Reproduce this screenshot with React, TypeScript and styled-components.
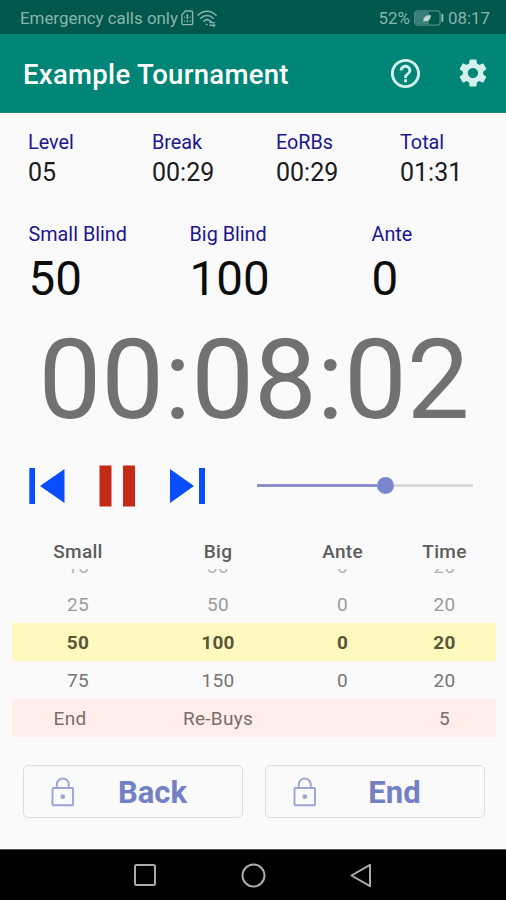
import React from "react";
import styled, { createGlobalStyle, css } from "styled-components";
import { MdHelpOutline, MdSettings } from "react-icons/md";

const GlobalStyle = createGlobalStyle`
  *, *::before, *::after { box-sizing: border-box; }
  body { margin: 0; background: #fafafa; font-family: Roboto, "Liberation Sans", sans-serif; }
  button { font-family: inherit; border: 0; padding: 0; background: none; display: block; }
  svg { display: block; flex: none; }
`;

const Screen = styled.div`
  width: 506px;
  height: 900px;
  display: flex;
  flex-direction: column;
  overflow: hidden;
  background: #fafafa;
`;

const StatusBar = styled.header`
  height: 34px;
  flex: none;
  display: flex;
  align-items: center;
  justify-content: space-between;
  padding: 2px 16px 0 20px;
  background: #00574b;
  color: #8ab5ae;
  font-size: 16.9px;
`;

const StatusGroup = styled.div<{ $gap: number }>`
  display: flex;
  align-items: center;
  gap: ${(p) => p.$gap}px;
  white-space: nowrap;
`;

const AppBar = styled.div`
  height: 79px;
  flex: none;
  display: flex;
  align-items: center;
  padding: 0 16px 0 23px;
  background: #008577;
  border-bottom: 1px solid #23887d;
`;

const Title = styled.h1`
  margin: 4px auto 0 0;
  color: #fff;
  font-size: 27.5px;
  font-weight: 500;
  letter-spacing: 0.3px;
  line-height: 36px;
  white-space: nowrap;
`;

const Actions = styled.div`
  display: flex;
  gap: 33px;
  color: #d3f1ec;
`;

const Content = styled.main`
  flex: 1;
  display: flex;
  flex-direction: column;
  padding-top: 15px;
`;

const Stats = styled.section`
  display: grid;
  grid-template-columns: 124px 124px 124px 1fr;
  padding-left: 28px;
`;

const Blinds = styled.section`
  display: grid;
  grid-template-columns: 161px 182px 1fr;
  margin-top: 31px;
  padding-left: 28.5px;
`;

const Label = styled.div`
  color: #1c1590;
  font-size: 19.8px;
  line-height: 29px;
`;

const StatValue = styled.div`
  color: #1c1c1c;
  font-size: 25px;
  line-height: 32px;
`;

const BlindValue = styled.div`
  margin-top: 2px;
  color: #0c0c0c;
  font-size: 47.5px;
  line-height: 56px;
`;

const Clock = styled.div`
  margin-top: 17px;
  padding-left: 2px;
  color: #717171;
  font-size: 111.8px;
  line-height: 112px;
  text-align: center;
  white-space: nowrap;
`;

const Controls = styled.section`
  height: 73px;
  margin-top: 13px;
  display: flex;
  align-items: center;
  padding: 0 33px 0 29px;
`;

const Transport = styled.div`
  width: 227.5px;
  display: flex;
  align-items: center;
  gap: 34px;
`;

const Slider = styled.div`
  flex: 1;
  display: flex;
  align-items: center;
`;

const Track = styled.div<{ $filled?: boolean }>`
  height: 3px;
  ${(p) =>
    p.$filled
      ? css`
          width: 120.5px;
          background: #8890c8;
        `
      : css`
          flex: 1;
          background: #d9d9d9;
        `}
`;

const Thumb = styled.div`
  width: 17px;
  height: 17px;
  border-radius: 50%;
  background: #7986cb;
`;

const Schedule = styled.section`
  width: 484px;
  margin-left: 12px;
  margin-top: 9px;
  display: flex;
  flex-direction: column;
`;

type Tone = "head" | "passed" | "past" | "current" | "next" | "break";

const tones = {
  head: css`
    padding-top: 3px;
    color: #5d5d5d;
    font-weight: 500;
  `,
  passed: css`
    color: #b4b4b4;
  `,
  past: css`
    color: #9b9b9b;
  `,
  current: css`
    color: #5a5738;
    font-weight: 700;
    background: #fff9c0;
  `,
  next: css`
    color: #767676;
  `,
  break: css`
    color: #7a6d6b;
    background: #ffeeea;
  `,
};

const Row = styled.div<{ $tone: Tone }>`
  height: 38px;
  flex: none;
  display: grid;
  grid-template-columns: 132px 148px 101px 103px;
  align-items: center;
  padding-top: 1px;
  text-align: center;
  font-size: 19px;
  letter-spacing: 0.3px;
  ${(p) => tones[p.$tone]}
`;

const Cell = styled.span<{ $shifted?: boolean }>`
  padding-right: ${(p) => (p.$shifted ? 16 : 0)}px;
`;

const Rows = styled.div`
  height: 168px;
  display: flex;
  flex-direction: column;
  justify-content: flex-end;
  overflow: hidden;
`;

const Buttons = styled.section`
  display: grid;
  grid-template-columns: 220px 220px;
  gap: 22px;
  margin: 28px 0 0 23px;
`;

const LockedButton = styled.button`
  height: 53px;
  display: grid;
  grid-template-columns: 77px 103px 1fr;
  align-items: center;
  justify-items: center;
  border: 1.5px solid #dddfde;
  border-radius: 5px;
  color: #7480c5;
  font-size: 31px;
  font-weight: 700;
  line-height: 36px;
`;

const ButtonText = styled.span`
  padding-top: 3px;
`;

const NavBar = styled.nav`
  height: 51px;
  flex: none;
  display: flex;
  align-items: center;
  justify-content: center;
  gap: 84px;
  background: #000;
  border-top: 1px solid #555;
  padding-right: 2px;
`;

const stats = [
  ["Level", "05"],
  ["Break", "00:29"],
  ["EoRBs", "00:29"],
  ["Total", "01:31"],
];

const blinds = [
  ["Small Blind", "50"],
  ["Big Blind", "100"],
  ["Ante", "0"],
];

const levels: { tone: Tone; cells: string[] }[] = [
  { tone: "passed", cells: ["15", "30", "0", "20"] },
  { tone: "past", cells: ["25", "50", "0", "20"] },
  { tone: "current", cells: ["50", "100", "0", "20"] },
  { tone: "next", cells: ["75", "150", "0", "20"] },
  { tone: "break", cells: ["End", "Re-Buys", "", "5"] },
];

const SimAlertIcon = () => (
  <svg width="13" height="16" viewBox="0 0 14 17" fill="none" stroke="currentColor" strokeWidth="1.5">
    <path d="M4.8 1h6.400a1.300 1.300 0 0 1 1.300 1.300v12a1.300 1.300 0 0 1-1.300 1.300H2.300A1.300 1.300 0 0 1 1 14.300V5z" />
    <path d="M6.900 4.500v5.300M6.900 11.200v2" strokeWidth="1.800" />
    <path d="M4 7v1.500M4 11v2M9.800 7v1.500M9.800 11v2" strokeWidth="1" />
  </svg>
);

const WifiIcon = () => (
  <svg width="20" height="17" viewBox="0 0 20 17" fill="none" stroke="currentColor" strokeWidth="1.600" strokeLinecap="round">
    <path d="M1 5.200C6-.1 14-.1 19 5.200M3.800 8.200c3.500-3.600 8.900-3.600 12.400 0M6.800 11.200c1.900-1.900 4.500-1.900 6.300-.2" />
    <path d="M9.300 14.500h.8M13 12.600h4.500M13 15.300h5M13 12.600l1.500-1.300M18 15.300l-1.300 1" strokeWidth="1.400" />
  </svg>
);

const BatteryIcon = () => (
  <svg width="30" height="16" viewBox="0 0 30 16">
    <rect x="0.600" y="0.800" width="25.500" height="14.400" rx="3" fill="#00574b" stroke="#4e8d84" strokeWidth="1.200" />
    <path d="M3 1.500h12v13H3a2 2 0 0 1-2-2v-9a2 2 0 0 1 2-2z" fill="#3b8077" />
    <path d="M9.500 11.500c-.5-4 2-6.300 7.500-6.500-.3 4.500-2.500 6.700-6.200 6l-1 1.300z" fill="#b9d6d1" />
    <rect x="27.500" y="4" width="1.800" height="8" rx="0.800" fill="#9cc3bd" />
  </svg>
);

const PreviousIcon = () => (
  <svg width="36" height="36" viewBox="0 0 36 36" fill="#0a4dff">
    <path d="M.3 0H6v36H.3zM35.500 1v34L11 18z" />
  </svg>
);

const PauseIcon = () => (
  <svg width="36" height="42" viewBox="0 0 36 42" fill="#c52a18">
    <path d="M.5 .5H12.500v41H.5zM24 .5h12v41H24z" />
  </svg>
);

const NextIcon = () => (
  <svg width="36" height="36" viewBox="0 0 36 36" fill="#0a4dff">
    <path d="M1 1v34l24-17zM30 0h6v36h-6z" />
  </svg>
);

const LockIcon = () => (
  <svg width="24" height="30" viewBox="0 0 24 30" fill="none" stroke="#9ca5d6" strokeWidth="1.900">
    <rect x="1.500" y="11" width="20.500" height="17.300" rx="1" />
    <path d="M5.800 11V7.500a6 6 0 0 1 12 0V11" />
    <circle cx="11.800" cy="19.700" r="2.400" fill="#9ca5d6" stroke="none" />
  </svg>
);

const RecentsIcon = () => (
  <svg width="24" height="24" viewBox="0 0 24 24" fill="none" stroke="#ababab" strokeWidth="2">
    <rect x="2" y="2" width="20" height="20" rx="1.500" />
  </svg>
);

const HomeIcon = () => (
  <svg width="25" height="25" viewBox="0 0 25 25" fill="none" stroke="#ababab" strokeWidth="2">
    <circle cx="12.500" cy="12.500" r="11" />
  </svg>
);

const BackIcon = () => (
  <svg width="22" height="25" viewBox="0 0 22 25" fill="none" stroke="#ababab" strokeWidth="2" strokeLinejoin="round">
    <path d="M20 1.800v21.400L1.500 12.500z" />
  </svg>
);

export default function App() {
  return (
    <>
      <GlobalStyle />
      <Screen>
        <StatusBar>
          <StatusGroup $gap={3}>
            <span>Emergency calls only</span>
            <SimAlertIcon />
            <WifiIcon />
          </StatusGroup>
          <StatusGroup $gap={4}>
            <span>52%</span>
            <BatteryIcon />
            <span>08:17</span>
          </StatusGroup>
        </StatusBar>
        <AppBar>
          <Title>Example Tournament</Title>
          <Actions>
            <MdHelpOutline size={35} />
            <MdSettings size={34} />
          </Actions>
        </AppBar>
        <Content>
          <Stats>
            {stats.map(([label, value]) => (
              <div key={label}>
                <Label>{label}</Label>
                <StatValue>{value}</StatValue>
              </div>
            ))}
          </Stats>
          <Blinds>
            {blinds.map(([label, value]) => (
              <div key={label}>
                <Label>{label}</Label>
                <BlindValue>{value}</BlindValue>
              </div>
            ))}
          </Blinds>
          <Clock>00:08:02</Clock>
          <Controls>
            <Transport>
              <button aria-label="Previous level"><PreviousIcon /></button>
              <button aria-label="Pause"><PauseIcon /></button>
              <button aria-label="Next level"><NextIcon /></button>
            </Transport>
            <Slider>
              <Track $filled />
              <Thumb />
              <Track />
            </Slider>
          </Controls>
          <Schedule>
            <Row $tone="head">
              <Cell>Small</Cell>
              <Cell>Big</Cell>
              <Cell>Ante</Cell>
              <Cell>Time</Cell>
            </Row>
            <Rows>
              {levels.map((level, i) => (
                <Row key={i} $tone={level.tone}>
                  {level.cells.map((text, j) => (
                    <Cell key={j} $shifted={level.tone === "break" && j === 0}>
                      {text}
                    </Cell>
                  ))}
                </Row>
              ))}
            </Rows>
          </Schedule>
          <Buttons>
            <LockedButton>
              <LockIcon />
              <ButtonText>Back</ButtonText>
            </LockedButton>
            <LockedButton>
              <LockIcon />
              <ButtonText>End</ButtonText>
            </LockedButton>
          </Buttons>
        </Content>
        <NavBar>
          <RecentsIcon />
          <HomeIcon />
          <BackIcon />
        </NavBar>
      </Screen>
    </>
  );
}
